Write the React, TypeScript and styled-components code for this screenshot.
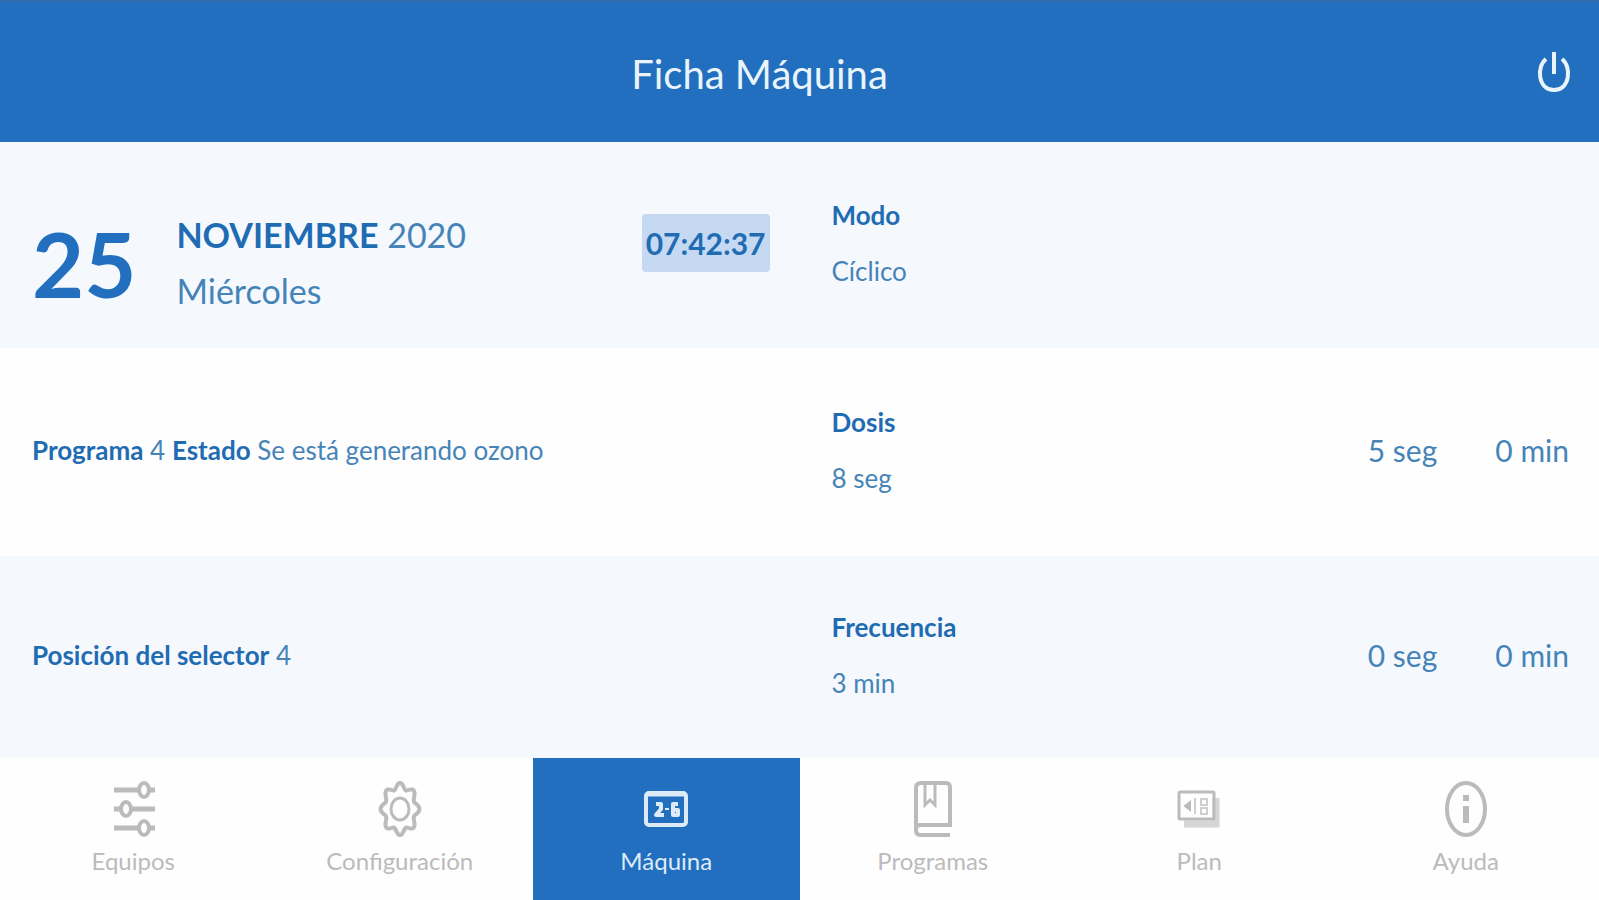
import React from "react";
import styled, { createGlobalStyle } from "styled-components";

const blue = "#216fbe";
const ink = "#1f6cb3";
const soft = "#4684b8";

const GlobalStyle = createGlobalStyle`
  *, *::before, *::after { box-sizing: border-box; }
  body {
    margin: 0;
    font-family: Lato, "Liberation Sans", sans-serif;
    background: #fefefe;
    color: ${soft};
  }
`;

const Page = styled.div`
  display: grid;
  grid-template-rows: auto 1fr auto;
  min-height: 100vh;
`;

const Header = styled.header`
  display: grid;
  grid-template-columns: 1fr auto 1fr;
  align-items: center;
  height: 142px;
  padding: 0 28px;
  background: ${blue};
  border-top: 2px solid #346bab;
  color: #eaf4fb;
`;

const Title = styled.h1`
  grid-column: 2;
  margin: 0;
  padding: 4px 80px 0 0;
  font-size: 40px;
  line-height: 52px;
  font-weight: 400;
`;

const PowerButton = styled.button`
  justify-self: end;
  display: flex;
  padding: 0;
  border: 0;
  background: none;
  color: inherit;
  cursor: pointer;
`;

const Main = styled.main`
  display: grid;
  grid-template-rows: 206px 1fr 202px;
`;

const Row = styled.section<{ $tinted?: boolean }>`
  display: grid;
  grid-template-columns: 1fr 1fr;
  padding-bottom: 4px;
  background: ${(p) => (p.$tinted ? "#f5f9fe" : "#fefefe")};
`;

const Cell = styled.div`
  display: flex;
  align-items: center;
  justify-content: space-between;
  padding: 0 30px 0 32px;
`;

const DateGroup = styled.div`
  display: flex;
  align-items: center;
  gap: 40px;
  padding-top: 40px;
`;

const Day = styled.span`
  font-size: 90px;
  line-height: 112px;
  font-weight: 700;
  color: ${blue};
`;

const DateLines = styled.div`
  font-size: 34px;
  line-height: 56px;
`;

const Strong = styled.strong`
  font-weight: 700;
  color: ${ink};
`;

const Clock = styled.time`
  padding: 0 4px;
  border-radius: 4px;
  background: #c6d9f3;
  color: ${ink};
  font-size: 30px;
  font-weight: 700;
  line-height: 58px;
`;

const Status = styled.p`
  margin: 0;
  font-size: 26px;
  line-height: 36px;
`;

const Field = styled.dl`
  margin: 0;
  font-size: 26px;
  line-height: 56px;
`;

const FieldName = styled.dt`
  font-weight: 700;
  color: ${ink};
`;

const FieldValue = styled.dd`
  margin: 0;
`;

const Timers = styled.div`
  display: flex;
  gap: 58px;
  font-size: 30px;
  line-height: 40px;
`;

const Nav = styled.nav`
  display: grid;
  grid-template-columns: repeat(6, 1fr);
  height: 142px;
  background: #fefefe;
`;

const Tab = styled.a<{ $active?: boolean }>`
  display: flex;
  flex-direction: column;
  align-items: center;
  gap: 8px;
  padding-top: 23px;
  background: ${(p) => (p.$active ? blue : "transparent")};
  color: ${(p) => (p.$active ? "#dcebf7" : "#bbbbbb")};
  font-size: 24px;
  line-height: 32px;
  text-decoration: none;
`;

const Glyph = styled.svg`
  display: block;
  fill: none;
  stroke: currentColor;
  stroke-width: 4;
`;

const gearPath =
  Array.from({ length: 145 }, (_, i) => {
    const a = (i / 144) * Math.PI * 2;
    const r = 0.86 + 0.11 * Math.cos(8 * a);
    const x = 22 + 20 * r * Math.cos(a);
    const y = 28 + 27 * r * Math.sin(a);
    return `${i ? "L" : "M"}${x.toFixed(2)} ${y.toFixed(2)}`;
  }).join("") + "Z";

const EquiposIcon = () => (
  <Glyph width="44" height="56" viewBox="0 0 44 56" aria-hidden="true">
    <path d="M3 9H28M38 9H44M3 28H10M20 28H44M3 47H28M38 47H44" strokeWidth="5" />
    <ellipse cx="33" cy="9" rx="5" ry="7" />
    <ellipse cx="15" cy="28" rx="5" ry="7" />
    <ellipse cx="33" cy="47" rx="5" ry="7" />
  </Glyph>
);

const ConfigIcon = () => (
  <Glyph width="44" height="56" viewBox="0 0 44 56" aria-hidden="true">
    <path d={gearPath} strokeWidth="4" strokeLinejoin="round" />
    <ellipse cx="22" cy="28" rx="9" ry="11" strokeWidth="3" />
  </Glyph>
);

const MaquinaIcon = () => (
  <Glyph width="44" height="56" viewBox="0 0 44 56" aria-hidden="true">
    <rect x="2" y="12" width="40" height="32" rx="3" />
    <path d="M3 13H41" strokeWidth="5" />
    <path d="M12 23H17V28L12 34H20M34 23H29V34H34V29H29" strokeLinejoin="round" />
    <path d="M21 28H25" strokeWidth="2" />
  </Glyph>
);

const ProgramasIcon = () => (
  <Glyph width="44" height="56" viewBox="0 0 44 56" aria-hidden="true">
    <path d="M39 54H9Q5 54 5 49V7Q5 2 10 2H35Q39 2 39 7V44H9Q5 44 5 49" />
    <path d="M14 3V24L19 19L24 24V3" strokeWidth="3" />
  </Glyph>
);

const PlanIcon = () => (
  <Glyph width="44" height="56" viewBox="0 0 44 56" aria-hidden="true">
    <path d="M39 17V43H7" strokeWidth="7" opacity="0.6" />
    <rect x="2" y="11" width="35" height="27" rx="1" strokeWidth="3" />
    <path d="M13 21V29L8 25Z" strokeWidth="2" fill="currentColor" />
    <path d="M18 17V33M24 18H30V24H24ZM24 27H30V33H24Z" strokeWidth="2" opacity="0.7" />
  </Glyph>
);

const AyudaIcon = () => (
  <Glyph width="44" height="56" viewBox="0 0 44 56" aria-hidden="true">
    <ellipse cx="22" cy="28" rx="19" ry="26" />
    <path d="M22 14V20M22 25V42" strokeWidth="6" />
  </Glyph>
);

const PowerIcon = () => (
  <Glyph width="34" height="44" viewBox="0 0 34 44" aria-hidden="true">
    <path d="M9 9C-1 17 1 40 17 40S35 17 25 9" />
    <path d="M17 2V24" />
  </Glyph>
);

const tabs = [
  { label: "Equipos", Icon: EquiposIcon },
  { label: "Configuración", Icon: ConfigIcon },
  { label: "Máquina", Icon: MaquinaIcon, active: true },
  { label: "Programas", Icon: ProgramasIcon },
  { label: "Plan", Icon: PlanIcon },
  { label: "Ayuda", Icon: AyudaIcon },
];

const Setting = ({ name, value }: { name: string; value: string }) => (
  <Field>
    <FieldName>{name}</FieldName>
    <FieldValue>{value}</FieldValue>
  </Field>
);

export default function App() {
  return (
    <Page>
      <GlobalStyle />
      <Header>
        <Title>Ficha Máquina</Title>
        <PowerButton type="button" aria-label="Apagar">
          <PowerIcon />
        </PowerButton>
      </Header>
      <Main>
        <Row $tinted>
          <Cell>
            <DateGroup>
              <Day>25</Day>
              <DateLines>
                <div>
                  <Strong>NOVIEMBRE</Strong> 2020
                </div>
                <div>Miércoles</div>
              </DateLines>
            </DateGroup>
            <Clock>07:42:37</Clock>
          </Cell>
          <Cell>
            <Setting name="Modo" value="Cíclico" />
          </Cell>
        </Row>
        <Row>
          <Cell>
            <Status>
              <Strong>Programa</Strong> 4 <Strong>Estado</Strong> Se está generando ozono
            </Status>
          </Cell>
          <Cell>
            <Setting name="Dosis" value="8 seg" />
            <Timers>
              <span>5 seg</span>
              <span>0 min</span>
            </Timers>
          </Cell>
        </Row>
        <Row $tinted>
          <Cell>
            <Status>
              <Strong>Posición del selector</Strong> 4
            </Status>
          </Cell>
          <Cell>
            <Setting name="Frecuencia" value="3 min" />
            <Timers>
              <span>0 seg</span>
              <span>0 min</span>
            </Timers>
          </Cell>
        </Row>
      </Main>
      <Nav>
        {tabs.map(({ label, Icon, active }) => (
          <Tab key={label} href="#" $active={active} aria-current={active ? "page" : undefined}>
            <Icon />
            {label}
          </Tab>
        ))}
      </Nav>
    </Page>
  );
}
